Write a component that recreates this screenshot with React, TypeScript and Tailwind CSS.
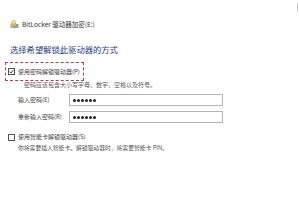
import React from "react";

const font = {
  fontFamily: '"Noto Sans CJK SC", "Noto Sans", "Liberation Sans", sans-serif',
};

function DriveIcon() {
  return (
    <svg width="9" height="9" viewBox="0 0 9 9">
      <rect x="0.5" y="4" width="8" height="4" rx="0.5" fill="#9a9a9a" />
      <rect x="1" y="6.5" width="2" height="0.8" fill="#e0e0e0" />
      <path d="M2 4 V2.2 a1.6 1.6 0 0 1 3.2 0 V4" fill="none" stroke="#c9a23a" strokeWidth="1" />
      <rect x="1.3" y="3.2" width="4.6" height="2.8" rx="0.4" fill="#e2b640" />
    </svg>
  );
}

function CheckBox({ checked }: { checked?: boolean }) {
  return (
    <div className="w-[7px] h-[7px] border border-[#555] bg-white flex items-center justify-center shrink-0">
      {checked && (
        <svg width="5" height="5" viewBox="0 0 5 5">
          <path d="M0.6 2.6 L2 4 L4.5 0.8" fill="none" stroke="#333" strokeWidth="0.9" />
        </svg>
      )}
    </div>
  );
}

function PasswordRow({ label }: { label: string }) {
  return (
    <div className="flex items-center h-[12px]">
      <div className="w-[51px] pl-[18px] box-content text-[6px] leading-[8px] text-[#444] whitespace-nowrap">
        {label}
      </div>
      <div className="w-[154px] h-[12px] border border-[#b4b4b4] bg-white flex items-center gap-[1px] pl-[3px]">
        {[0, 1, 2, 3, 4, 5].map((i) => (
          <div key={i} className="w-[3px] h-[3px] rounded-full bg-[#222]" />
        ))}
      </div>
    </div>
  );
}

export default function App() {
  return (
    <div className="w-[299px] h-[200px] bg-white relative overflow-hidden" style={font}>
      <div className="absolute right-[1px] top-[3px] w-[1px] h-[9px] bg-[#c8c8c8]" />

      <div className="flex items-center gap-[3px] pl-[10px] pt-[20px] h-[28px]">
        <DriveIcon />
        <span className="text-[6.5px] leading-[8px] text-[#333]">BitLocker 驱动器加密(E:)</span>
      </div>

      <div className="mt-[16px] pl-[10px] text-[8.3px] leading-[10px] text-[#1e3a8a]">
        选择希望解锁此驱动器的方式
      </div>

      <div className="mt-[8px] ml-[5px] w-[79px] h-[19px] border-[1.5px] border-dashed border-[#c8383a] flex items-center gap-[3px] pl-[2px]">
        <CheckBox checked />
        <span className="text-[6px] leading-[8px] text-[#444] whitespace-nowrap">使用密码解锁驱动器(P)</span>
      </div>

      <div className="pl-[24px] text-[6px] leading-[8px] text-[#555] whitespace-nowrap">
        密码应该包含大小写字母、数字、空格以及符号。
      </div>

      <div className="mt-[5px] flex flex-col gap-[5px]">
        <PasswordRow label="输入密码(E)" />
        <PasswordRow label="重新输入密码(R)" />
      </div>

      <div className="mt-[10px] pl-[8px] flex items-center gap-[3px] h-[8px]">
        <CheckBox />
        <span className="text-[6px] leading-[8px] text-[#444] whitespace-nowrap">使用智能卡解锁驱动器(S)</span>
      </div>

      <div className="mt-[3px] pl-[18px] text-[5.8px] leading-[8px] text-[#555] whitespace-nowrap">
        你将需要插入智能卡。解锁驱动器时，将需要智能卡 PIN。
      </div>
    </div>
  );
}
